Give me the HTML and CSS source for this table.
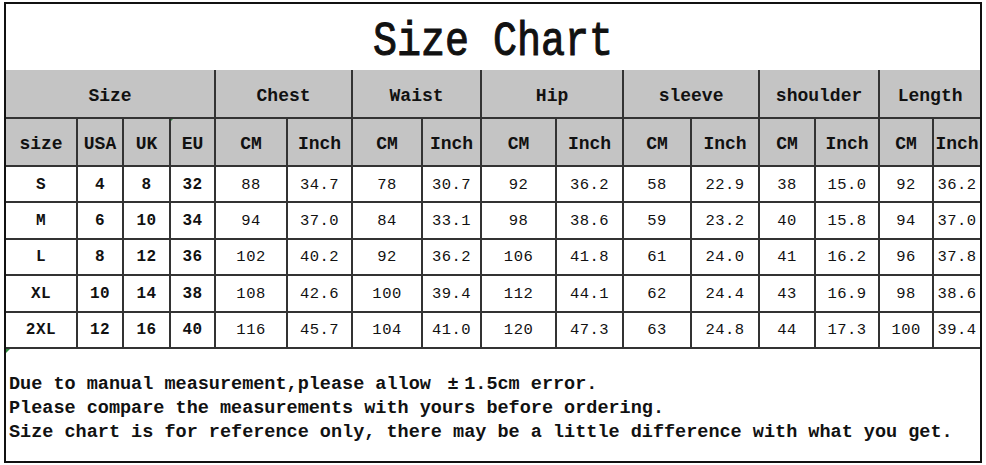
FILE: index.html
```html
<!DOCTYPE html>
<html>
<head>
<meta charset="utf-8">
<link rel="stylesheet" href="styles.css">
</head>
<body>
<div class="chart">
  <div class="title"><span class="title-text">Size Chart</span></div>
  <table class="grid">
    <colgroup>
      <col class="c71"><col class="c46"><col class="c47"><col class="c45">
      <col class="c72"><col class="c65"><col class="c70"><col class="c59">
      <col class="c75"><col class="c67"><col class="c68"><col class="c68">
      <col class="c56"><col class="c64"><col class="c54"><col class="c47">
    </colgroup>
    <thead>
      <tr class="h1">
        <th colspan="4">Size</th>
        <th colspan="2">Chest</th>
        <th colspan="2">Waist</th>
        <th colspan="2">Hip</th>
        <th colspan="2">sleeve</th>
        <th colspan="2">shoulder</th>
        <th colspan="2">Length</th>
      </tr>
      <tr class="h2">
        <th>size</th><th>USA</th><th>UK</th><th class="mark">EU</th>
        <th>CM</th><th>Inch</th><th>CM</th><th>Inch</th>
        <th>CM</th><th>Inch</th><th>CM</th><th>Inch</th>
        <th>CM</th><th>Inch</th><th>CM</th><th>Inch</th>
      </tr>
    </thead>
    <tbody>
      <tr><td class="b">S</td><td class="b">4</td><td class="b">8</td><td class="b">32</td><td>88</td><td>34.7</td><td>78</td><td>30.7</td><td>92</td><td>36.2</td><td>58</td><td>22.9</td><td>38</td><td>15.0</td><td>92</td><td>36.2</td></tr>
      <tr><td class="b">M</td><td class="b">6</td><td class="b">10</td><td class="b">34</td><td>94</td><td>37.0</td><td>84</td><td>33.1</td><td>98</td><td>38.6</td><td>59</td><td>23.2</td><td>40</td><td>15.8</td><td>94</td><td>37.0</td></tr>
      <tr><td class="b">L</td><td class="b">8</td><td class="b">12</td><td class="b">36</td><td>102</td><td>40.2</td><td>92</td><td>36.2</td><td>106</td><td>41.8</td><td>61</td><td>24.0</td><td>41</td><td>16.2</td><td>96</td><td>37.8</td></tr>
      <tr><td class="b">XL</td><td class="b">10</td><td class="b">14</td><td class="b">38</td><td>108</td><td>42.6</td><td>100</td><td>39.4</td><td>112</td><td>44.1</td><td>62</td><td>24.4</td><td>43</td><td>16.9</td><td>98</td><td>38.6</td></tr>
      <tr><td class="b">2XL</td><td class="b">12</td><td class="b">16</td><td class="b">40</td><td>116</td><td>45.7</td><td>104</td><td>41.0</td><td>120</td><td>47.3</td><td>63</td><td>24.8</td><td>44</td><td>17.3</td><td>100</td><td>39.4</td></tr>
    </tbody>
  </table>
  <div class="notes mark-low">
    <p>Due to manual measurement,please allow <span class="pm">±</span>1.5cm error.</p>
    <p>Please compare the measurements with yours before ordering.</p>
    <p>Size chart is for reference only, there may be a little difference with what you get.</p>
  </div>
</div>
</body>
</html>
```

FILE: styles.css
```css
html, body {
  margin: 0;
  padding: 0;
  background: #ffffff;
}

.chart {
  margin: 2px 4px 0 4px;
  width: 974px;
  height: 457px;
  border: 2px solid #111111;
  display: flex;
  flex-direction: column;
  font-family: "Liberation Mono", "DejaVu Sans Mono", monospace;
  color: #111111;
}

.title {
  height: 66px;
  display: flex;
  align-items: center;
  justify-content: center;
}

.title-text {
  display: inline-block;
  font-size: 40px;
  font-weight: normal;
  -webkit-text-stroke: 0.9px #111111;
  transform: scaleY(1.2);
  padding: 9px 0 0 0;
  margin-right: 0;
}

.grid {
  width: 974px;
  table-layout: fixed;
  border-collapse: collapse;
  border-style: hidden;
  border-bottom: 2px solid #333333;
}

.grid th, .grid td {
  border: 2px solid #333333;
  text-align: center;
  padding: 0;
  white-space: nowrap;
  overflow: hidden;
}

.grid th {
  background: #c4c4c4;
  font-weight: bold;
  font-size: 18px;
  padding-top: 4px;
}

.grid .h1 th {
  height: 43px;
  border-top: 2px solid #333333;
}

.grid .h2 th {
  height: 43px;
  padding-top: 3px;
}

.grid td {
  height: 33.4px;
  font-size: 15.5px;
  letter-spacing: 0.5px;
  padding-top: 1px;
}

.grid td.b {
  font-weight: bold;
  font-size: 16px;
}

.mark {
  position: relative;
}

.mark::before {
  content: "";
  position: absolute;
  left: -1px;
  top: -1px;
  border-top: 4px solid #2e8b3e;
  border-right: 4px solid transparent;
}

.c71 { width: 71px; }
.c46 { width: 46px; }
.c47 { width: 47px; }
.c45 { width: 45px; }
.c72 { width: 72px; }
.c65 { width: 65px; }
.c70 { width: 70px; }
.c59 { width: 59px; }
.c75 { width: 75px; }
.c67 { width: 67px; }
.c68 { width: 68px; }
.c56 { width: 56px; }
.c64 { width: 64px; }
.c54 { width: 54px; }

.notes {
  padding: 24px 0 0 3px;
}

.mark-low {
  position: relative;
}

.mark-low::before {
  content: "";
  position: absolute;
  left: 0;
  top: 0;
  border-top: 4px solid #2e8b3e;
  border-right: 4px solid transparent;
}

.notes p {
  margin: 0;
  font-size: 18.5px;
  line-height: 24px;
  font-weight: bold;
  white-space: nowrap;
}

.pm {
  display: inline-block;
  width: 2ch;
  text-align: center;
}
```
